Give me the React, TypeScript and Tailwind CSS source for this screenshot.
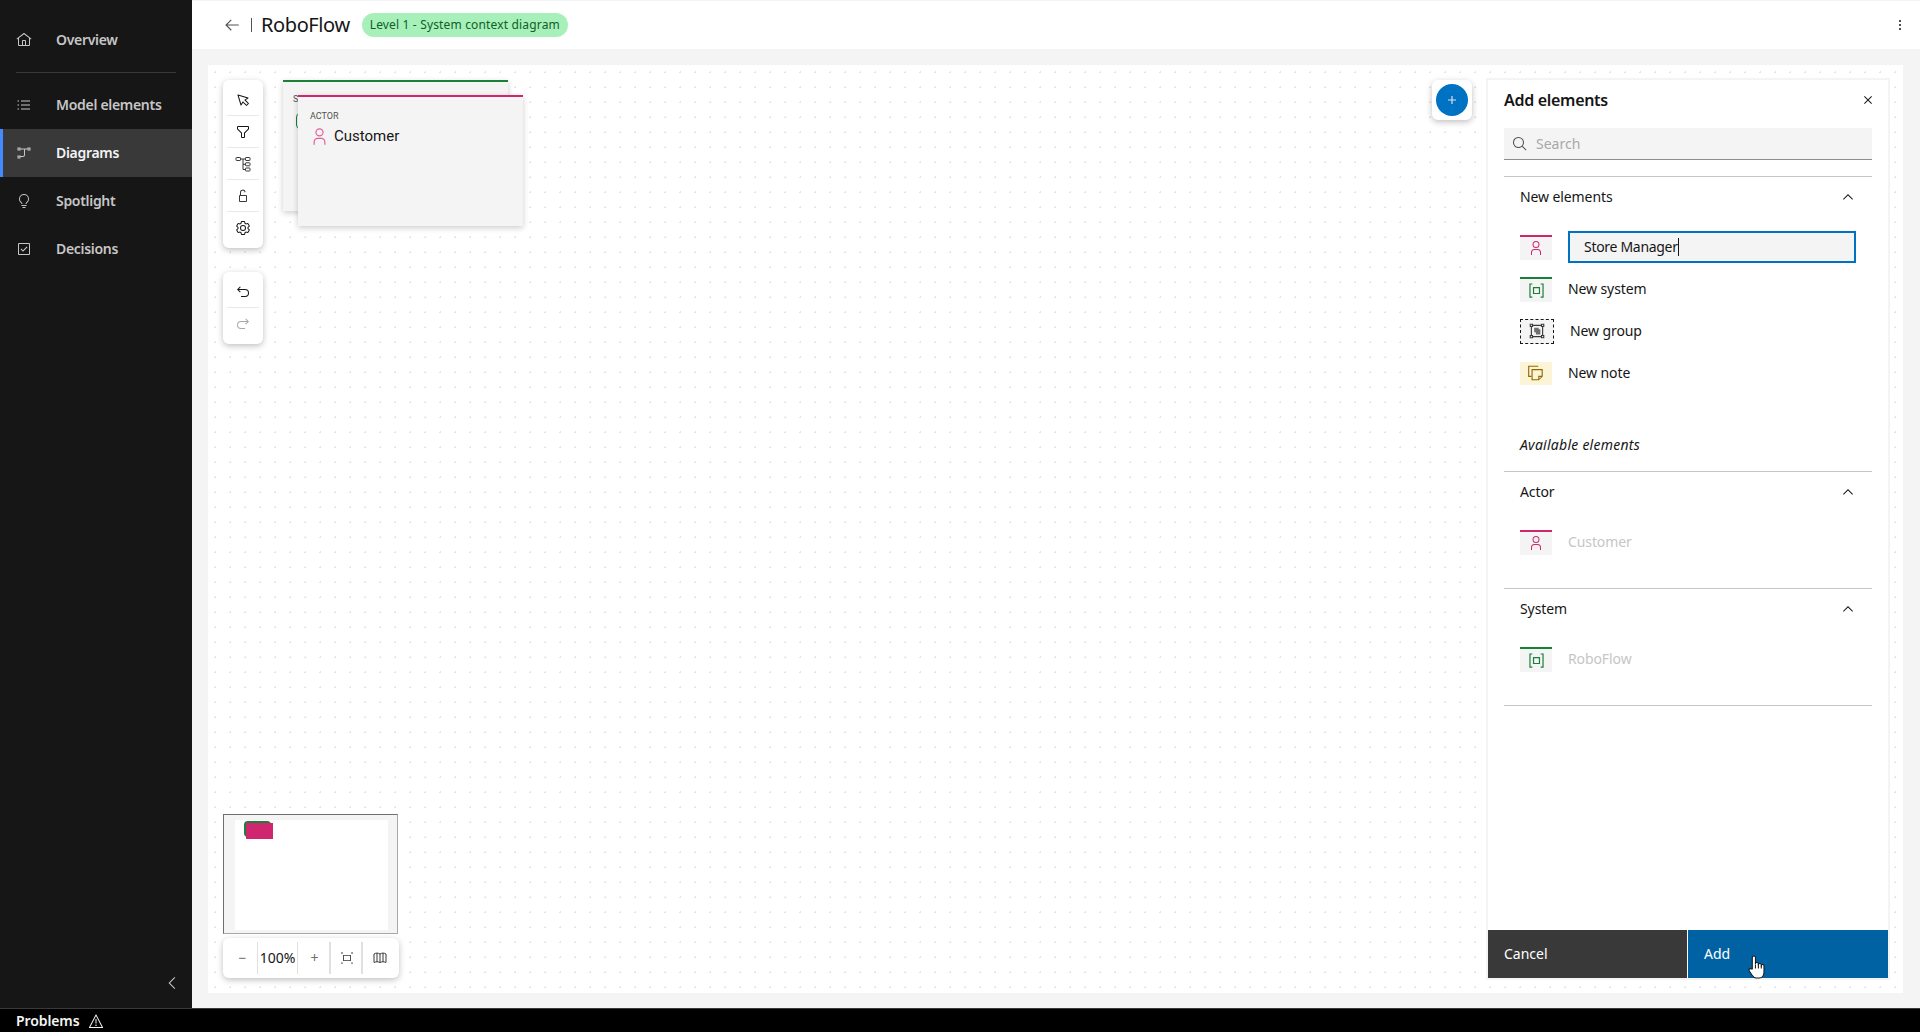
import React from "react";

type P = { s?: number; c?: string; className?: string };
const Ic = ({ s = 16, c = "currentColor", d, className }: P & { d: string[] }) => (
  <svg width={s} height={s} viewBox="0 0 32 32" fill={c} className={className}>
    {d.map((x, i) => (
      <path key={i} d={x} />
    ))}
  </svg>
);
const HOME = ["M16.6123,2.2138a1.01,1.01,0,0,0-1.2427,0L1,13.4194l1.2427,1.5717L4,13.6209V26a2.0041,2.0041,0,0,0,2,2H26a2.0037,2.0037,0,0,0,2-2V13.63L29.7573,15,31,13.4282ZM18,26H14V18h4Zm2,0V18a2.0023,2.0023,0,0,0-2-2H14a2.002,2.002,0,0,0-2,2v8H6V12.0615l10-7.79,10,7.8005V26Z"];
const LIST = ["M10 7H28V9H10zM10 15H28V17H10zM10 23H28V25H10zM3 7H6V9H3zM3 15H6V17H3zM3 23H6V25H3z"];
const FLOW = ["M3 5H9V11H3zM5 7V9H7V7zM23 5H29V11H23zM25 7V9H27V7zM3 21H9V27H3zM5 23V25H7V23zM9 7H23V9H18V20a4 4 0 0 1-4 4H9V22H14a2 2 0 0 0 2-2V9H9z"];
const IDEA = ["M11 24H21V26H11zM13 28H19V30H13zM16,2A10,10,0,0,0,6,12a9.19,9.19,0,0,0,3.46,7.62c1,.93,1.54,1.46,1.54,2.38h2c0-1.84-1.11-2.87-2.19-3.86A7.2,7.2,0,0,1,8,12a8,8,0,0,1,16,0,7.2,7.2,0,0,1-2.82,6.14c-1.07,1-2.18,2-2.18,3.86h2c0-.92.53-1.45,1.54-2.39A9.18,9.18,0,0,0,26,12,10,10,0,0,0,16,2Z"];
const CHECK = ["M26,4H6A2,2,0,0,0,4,6V26a2,2,0,0,0,2,2H26a2,2,0,0,0,2-2V6A2,2,0,0,0,26,4ZM6,26V6H26V26Z", "M14 21.5 9 16.54 10.59 15 14 18.35 21.41 11 23 12.58 14 21.5z"];
const CURSOR = ["M23,28a1,1,0,0,1-.71-.29l-6.13-6.14-3.33,5a1,1,0,0,1-1,.44,1,1,0,0,1-.81-.7l-6-20A1,1,0,0,1,6.29,5l20,6a1,1,0,0,1,.7.81,1,1,0,0,1-.44,1l-5,3.33,6.14,6.13a1,1,0,0,1,0,1.42l-4,4A1,1,0,0,1,23,28Zm0-2.41L25.59,23l-7.16-7.15,5.25-3.5L7.49,7.49l4.86,16.19,3.5-5.25Z"];
const FILTER = ["M18,28H14a2,2,0,0,1-2-2V18.41L4.59,11A2,2,0,0,1,4,9.59V6A2,2,0,0,1,6,4H26a2,2,0,0,1,2,2V9.59A2,2,0,0,1,27.41,11L20,18.41V26A2,2,0,0,1,18,28ZM6,6V9.59l8,8V26h4V17.59l8-8V6Z"];
const UNLOCK = ["M22,14H12V9a3.5,3.5,0,0,1,7-.5h2A5.5,5.5,0,0,0,10,9v5a2,2,0,0,0-2,2V26a2,2,0,0,0,2,2H22a2,2,0,0,0,2-2V16A2,2,0,0,0,22,14ZM10,26V16H22V26Z"];
const GEAR = ["M27,16.76c0-.25,0-.5,0-.76s0-.51,0-.77l1.92-1.68A2,2,0,0,0,29.3,11L26.94,7a2,2,0,0,0-1.73-1,2,2,0,0,0-.64.1l-2.43.82a11.35,11.35,0,0,0-1.31-.75l-.51-2.52a2,2,0,0,0-2-1.61H13.64a2,2,0,0,0-2,1.61l-.51,2.52a11.48,11.48,0,0,0-1.32.75L7.43,6.06A2,2,0,0,0,6.79,6,2,2,0,0,0,5.06,7L2.7,11a2,2,0,0,0,.41,2.51L5,15.24c0,.25,0,.5,0,.76s0,.51,0,.77L3.11,18.45A2,2,0,0,0,2.7,21L5.06,25a2,2,0,0,0,1.73,1,2,2,0,0,0,.64-.1l2.43-.82a11.35,11.35,0,0,0,1.31.75l.51,2.52a2,2,0,0,0,2,1.61h4.72a2,2,0,0,0,2-1.61l.51-2.52a11.48,11.48,0,0,0,1.32-.75l2.42.82a2,2,0,0,0,.64.1,2,2,0,0,0,1.73-1L29.3,21a2,2,0,0,0-.41-2.51ZM25.21,24l-3.43-1.16a8.86,8.86,0,0,1-2.71,1.57L18.36,28H13.64l-.71-3.55a9.36,9.36,0,0,1-2.7-1.57L6.79,24,4.43,20l2.72-2.4a8.9,8.9,0,0,1,0-3.13L4.43,12,6.79,8l3.43,1.16a8.86,8.86,0,0,1,2.71-1.57L13.64,4h4.72l.71,3.55a9.36,9.36,0,0,1,2.7,1.57L25.21,8,27.57,12l-2.72,2.4a8.9,8.9,0,0,1,0,3.13L27.57,20Z", "M16,22a6,6,0,1,1,6-6A5.94,5.94,0,0,1,16,22Zm0-10a3.91,3.91,0,0,0-4,4,3.91,3.91,0,0,0,4,4,3.91,3.91,0,0,0,4-4A3.91,3.91,0,0,0,16,12Z"];
const UNDO = ["M20,10H7.8149l3.5874-3.5859L10,5,4,11,10,17l1.4023-1.4146L7.8179,12H20a6,6,0,0,1,0,12H12v2h8a8,8,0,0,0,0-16Z"];
const REDO = ["M12,10H24.1851L20.5977,6.4141,22,5,28,11,22,17l-1.4023-1.4146L24.1821,12H12a6,6,0,0,0,0,12h8v2H12a8,8,0,0,1,0-16Z"];
const ARROW = ["M14 26 15.41 24.59 7.83 17 28 17 28 15 7.83 15 15.41 7.41 14 6 4 16 14 26z"];
const USER = ["M16,4a5,5,0,1,1-5,5,5,5,0,0,1,5-5m0-2a7,7,0,1,0,7,7A7,7,0,0,0,16,2Z", "M26,30H24V25a5,5,0,0,0-5-5H13a5,5,0,0,0-5,5v5H6V25a7,7,0,0,1,7-7h6a7,7,0,0,1,7,7Z"];
const SEARCH = ["M29,27.5859l-7.5521-7.5521a11.0177,11.0177,0,1,0-1.4141,1.4141L27.5859,29ZM4,13a9,9,0,1,1,9,9A9.01,9.01,0,0,1,4,13Z"];
const WARN = ["M16,23a1.5,1.5,0,1,0,1.5,1.5A1.5,1.5,0,0,0,16,23Z", "M15 12H17V21H15z", "M29,30H3a1,1,0,0,1-.8872-1.4614l13-25a1,1,0,0,1,1.7744,0l13,25A1,1,0,0,1,29,30ZM4.6507,28H27.3493l.002-.0033L16.002,6.1714h-.004L4.6487,27.9967Z"];
const CLOSE = ["M24 9.4 22.6 8 16 14.6 9.4 8 8 9.4 14.6 16 8 22.6 9.4 24 16 17.4 22.6 24 24 22.6 17.4 16 24 9.4z"];
const UP = ["M16 10 26 20 24.6 21.4 16 12.8 7.4 21.4 6 20z"];
const LEFT = ["M19 4 20.5 5.4 10 16 20.5 26.6 19 28 7 16z"];
const SYSTEM = ["M4 4H9V6H6V26H9V28H4zM23 4H28V28H23V26H26V6H23zM10 10H22V22H10zM12 12V20H20V12z"];
const GROUP_OUT = "M3 3H9V5H23V3H29V9H27V23H29V29H23V27H9V29H3V23H5V9H3zM5 5V7H7V5zM25 5V7H27V5zM5 25V27H7V25zM25 25V27H27V25zM7 9V23H9V25H23V23H25V9H23V7H9V9z";
const NOTE = ["M2 3H20V5H4V21H8V23H2z", "M8 9H28V22L21 29H8zM10 11V27H20V21H26V11zM22 23V26L25 23z"];
const FIT = ["M7 9H25V23H7zM9 11V21H23V11z", "M3 3H6V6H3zM26 3H29V6H26zM3 26H6V29H3zM26 26H29V29H26z"];

const Tree = () => (
  <svg width="16" height="16" viewBox="0 0 16 16" fill="none" stroke="#393939" strokeWidth="1">
    <rect x="1" y="1.5" width="4.5" height="3" rx="0.6" />
    <rect x="10.5" y="1.5" width="4.5" height="3" rx="0.6" />
    <rect x="10.5" y="6.8" width="4.5" height="3" rx="0.6" />
    <rect x="10.5" y="12" width="4.5" height="3" rx="0.6" />
    <path d="M5.5 3H10.5M8 3V13.5H10.5M8 8.3H10.5" />
  </svg>
);

const MapIcon = () => (
  <svg width="16" height="16" viewBox="0 0 16 16" fill="none" stroke="#393939" strokeWidth="1">
    <path d="M2 4C4 2.8 6 2.8 8 4C10 2.8 12 2.8 14 4V12.5C12 11.5 10 11.5 8 12.5C6 11.5 4 11.5 2 12.5ZM5 3.2V11.8M8 4V12.5M11 3.2V11.8" />
  </svg>
);

const Hand = () => (
  <svg width="18" height="24" viewBox="0 0 17 23" fill="#ffffff" stroke="#161616" strokeWidth="1" strokeLinejoin="round" className="absolute left-[260px] top-[25px]">
    <path d="M4 13.5V2.5a1.5 1.5 0 0 1 3 0V8.5a1.4 1.4 0 0 1 2.8 0V9.5a1.4 1.4 0 0 1 2.8 0V10.5a1.3 1.3 0 0 1 2.6 0V16c0 3-1.5 6-4.5 6H7.5C5.5 22 4.5 20.5 3.5 19L1 15c-.8-1.2.8-2.5 1.8-1.6Z" />
    <path d="M7 9V13M9.8 9V13M12.6 10V13" fill="none" />
  </svg>
);

const NavItem = ({ d, label, active }: { d: string[]; label: string; active?: boolean }) => (
  <div
    className={
      active
        ? "flex h-12 items-center gap-6 border-l-[3px] border-[#4589ff] bg-[#393939] pl-[13px] text-sm font-semibold tracking-[-0.3px] text-[#f4f4f4]"
        : "flex h-12 items-center gap-6 pl-4 text-sm font-semibold tracking-[-0.3px] text-[#c6c6c6]"
    }
  >
    <Ic d={d} s={16} c="#c6c6c6" />
    <span>{label}</span>
  </div>
);

const Swatch = ({ kind }: { kind: "actor" | "system" }) =>
  kind === "actor" ? (
    <div className="flex h-[25px] w-8 shrink-0 items-center justify-center border-t-2 border-[#d02670] bg-[#f4f4f4]">
      <Ic d={USER} s={16} c="#d02670" />
    </div>
  ) : (
    <div className="flex h-[25px] w-8 shrink-0 items-center justify-center border-t-2 border-[#198038] bg-[#f4f4f4]">
      <Ic d={SYSTEM} s={19} c="#198038" />
    </div>
  );

const SectionHead = ({ label }: { label: string }) => (
  <div className="flex h-[41px] items-center justify-between border-t border-[#c6c6c6] px-4 text-sm tracking-[-0.1px] text-[#161616]">
    <span>{label}</span>
    <Ic d={UP} s={16} c="#161616" />
  </div>
);

const ToolBtn = ({ d, c = "#161616", last }: { d: string[]; c?: string; last?: boolean }) => (
  <div className={last ? "flex h-8 items-center justify-center" : "flex h-8 items-center justify-center border-b border-[#e8e8e8]"}>
    <Ic d={d} s={16} c={c} />
  </div>
);

export default function App() {
  return (
    <div className="flex h-screen flex-col overflow-hidden bg-white font-['Noto_Sans',sans-serif] text-[#161616]">
      <div className="flex min-h-0 flex-1">
        <aside className="flex w-[192px] shrink-0 flex-col bg-[#161616] pt-4">
          <NavItem d={HOME} label="Overview" />
          <div className="mx-4 my-2 h-px bg-[#393939]" />
          <NavItem d={LIST} label="Model elements" />
          <NavItem d={FLOW} label="Diagrams" active />
          <NavItem d={IDEA} label="Spotlight" />
          <NavItem d={CHECK} label="Decisions" />
          <div className="mt-auto flex justify-end pb-[17px] pr-[11px]">
            <Ic d={LEFT} s={16} c="#c6c6c6" />
          </div>
        </aside>

        <div className="flex min-w-0 flex-1 flex-col bg-[#f4f4f4]">
          <header className="flex h-[49px] shrink-0 items-center border-t border-[#f4f4f4] bg-white pl-8 pr-3">
            <Ic d={ARROW} s={18} c="#525252" className="-ml-px" />
            <div className="ml-[10px] h-[14px] w-px bg-[#525252]" />
            <span className="ml-[9px] text-xl leading-7 tracking-[-0.4px] text-[#161616]">RoboFlow</span>
            <span className="ml-3 flex h-6 items-center rounded-full bg-[#a7f0ba] px-2 text-xs tracking-[0.16px] text-[#0e6027]">
              Level 1 - System context diagram
            </span>
            <svg className="ml-auto" width="16" height="16" viewBox="0 0 16 16" fill="#161616">
              <circle cx="8" cy="4" r="1" />
              <circle cx="8" cy="8" r="1" />
              <circle cx="8" cy="12" r="1" />
            </svg>
          </header>

          <div className="min-h-0 flex-1 pb-[15px] pl-4 pr-[17px] pt-4">
            <div className="relative flex h-full justify-end bg-white bg-[radial-gradient(#e4e4e4_1px,transparent_1px)] bg-[size:15px_15px] p-[13px]">
              {/* cards */}
              <div className="absolute left-[75px] top-[15px] h-[131px] w-[225px] border-t-2 border-[#198038] bg-[#f4f4f4] shadow-[0_2px_6px_rgba(0,0,0,0.2)]">
                <div className="absolute left-[10px] top-[11px] font-['Roboto',sans-serif] text-[9px] text-[#525252]">S</div>
                <div className="absolute left-[13px] top-[31px] h-4 w-4 rounded-sm border border-[#198038]" />
              </div>
              <div className="absolute left-[90px] top-[30px] h-[131px] w-[225px] border-t-2 border-[#d02670] bg-[#f4f4f4] pl-3 pt-3 font-['Roboto',sans-serif] shadow-[0_2px_6px_rgba(0,0,0,0.2)]">
                <div className="text-[9px] leading-[15px] text-[#525252]">ACTOR</div>
                <div className="mt-[2px] flex items-center gap-[5px] text-[15px] leading-5 text-[#161616]">
                  <Ic d={USER} s={19} c="#e0609a" />
                  <span>Customer</span>
                </div>
              </div>

              {/* tools */}
              <div className="absolute left-[15px] top-[15px] w-10 rounded-md bg-white px-1 py-1 shadow-[0_2px_6px_rgba(0,0,0,0.25)]">
                <ToolBtn d={CURSOR} />
                <ToolBtn d={FILTER} />
                <div className="flex h-8 items-center justify-center border-b border-[#e8e8e8]">
                  <Tree />
                </div>
                <ToolBtn d={UNLOCK} c="#393939" />
                <ToolBtn d={GEAR} last />
              </div>
              <div className="absolute left-[15px] top-[207px] w-10 rounded-md bg-white px-1 py-1 shadow-[0_2px_6px_rgba(0,0,0,0.25)]">
                <ToolBtn d={UNDO} />
                <ToolBtn d={REDO} c="#a8a8a8" last />
              </div>

              {/* minimap */}
              <div className="absolute bottom-[59px] left-[15px] flex h-[120px] w-[175px] border border-[#a8a8a8] border-l-[#6f6f6f] border-t-[#6f6f6f] bg-[#f4f4f4] py-[5px] pl-[11px]">
                <div className="relative h-[110px] w-[153px] bg-white">
                  <div className="absolute left-[9px] top-px h-4 w-[27px] rounded-sm bg-[#198038]" />
                  <div className="absolute left-[11px] top-[3px] h-4 w-[27px] bg-[#d02670]" />
                </div>
              </div>
              <div className="absolute bottom-[15px] left-[15px] flex h-10 w-[176px] items-center rounded-md bg-white shadow-[0_2px_6px_rgba(0,0,0,0.25)]">
                <div className="flex h-8 w-[35px] items-center justify-center border-r border-[#e0e0e0] pl-[5px] text-sm text-[#6f6f6f]">−</div>
                <div className="flex h-8 w-10 items-center justify-center border-r border-[#e0e0e0] text-sm">100%</div>
                <div className="flex h-8 w-[33px] items-center justify-center border-r-2 border-[#e0e0e0] pl-[2px] text-sm text-[#6f6f6f]">+</div>
                <div className="flex h-8 w-8 items-center justify-center border-r-2 border-[#e0e0e0] pl-px">
                  <Ic d={FIT} s={14} c="#393939" />
                </div>
                <div className="flex h-8 flex-1 items-center justify-center pr-[2px]">
                  <MapIcon />
                </div>
              </div>

              {/* plus */}
              <div className="mr-[14px] mt-[2px] flex h-10 w-10 items-center justify-center rounded-md bg-white shadow-[0_2px_6px_rgba(0,0,0,0.25)]">
                <div className="flex h-8 w-8 items-center justify-center rounded-full bg-[#0072c3] text-white">
                  <svg width="10" height="10" viewBox="0 0 10 10" fill="#e0e0e0">
                    <path d="M4.4 1H5.6V4.4H9V5.6H5.6V9H4.4V5.6H1V4.4H4.4z" />
                  </svg>
                </div>
              </div>

              {/* panel */}
              <section className="flex w-[404px] flex-col border-2 border-[#f4f4f4] bg-white">
                <div className="flex h-12 shrink-0 items-center justify-between px-4 pb-2">
                  <h2 className="text-base font-semibold tracking-[-0.3px] text-[#161616]">Add elements</h2>
                  <Ic d={CLOSE} s={16} c="#161616" className="mr-[-4px]" />
                </div>
                <div className="mx-4 flex h-8 shrink-0 items-center gap-2 border-b border-[#8d8d8d] bg-[#f4f4f4] pl-2 text-sm text-[#a8a8a8]">
                  <Ic d={SEARCH} s={16} c="#525252" />
                  <span>Search</span>
                </div>
                <div className="mx-4 mt-4">
                  <SectionHead label="New elements" />
                  <div className="flex flex-col gap-[10px] px-4 pt-[14px] tracking-[-0.1px]">
                    <div className="flex h-8 items-center gap-4">
                      <Swatch kind="actor" />
                      <div className="flex h-8 w-[288px] items-center border-2 border-[#0072c3] bg-[#f4f4f4] pl-[14px] text-sm tracking-[-0.3px] text-[#161616]">
                        Store Manager
                        <span className="h-[18px] w-px bg-[#161616]" />
                      </div>
                    </div>
                    <div className="flex h-8 items-center gap-4 text-sm">
                      <Swatch kind="system" />
                      <span>New system</span>
                    </div>
                    <div className="flex h-8 items-center gap-4 text-sm">
                      <div className="flex h-[25px] w-[34px] shrink-0 items-center justify-center border border-dashed border-[#161616] bg-[#f4f4f4]">
                        <svg width="18" height="18" viewBox="0 0 32 32">
                          <path fill="#393939" d={GROUP_OUT} />
                          <path fill="#6f6f6f" d="M11 10H19V13H22V22H14V18H11z" />
                        </svg>
                      </div>
                      <span>New group</span>
                    </div>
                    <div className="flex h-8 items-center gap-4 text-sm">
                      <div className="flex h-[23px] w-8 shrink-0 items-center justify-center bg-[#fcf4d6]">
                        <Ic d={NOTE} s={18} c="#8e6a00" />
                      </div>
                      <span>New note</span>
                    </div>
                  </div>
                  <div className="mb-4 mt-[46px] px-4 text-sm italic tracking-[0.25px] text-[#161616]">Available elements</div>
                  <SectionHead label="Actor" />
                  <div className="flex items-center gap-4 px-4 pb-[30px] pt-[14px] text-sm tracking-[-0.1px] text-[#c6c6c6]">
                    <div className="flex h-8 items-center gap-4">
                      <Swatch kind="actor" />
                      <span>Customer</span>
                    </div>
                  </div>
                  <SectionHead label="System" />
                  <div className="flex items-center gap-4 px-4 pb-[30px] pt-[14px] text-sm tracking-[-0.1px] text-[#c6c6c6]">
                    <div className="flex h-8 items-center gap-4">
                      <Swatch kind="system" />
                      <span>RoboFlow</span>
                    </div>
                  </div>
                  <div className="h-px bg-[#c6c6c6]" />
                </div>
                <div className="relative mt-auto flex h-12 shrink-0 gap-px text-sm text-white">
                  <div className="flex w-[199px] items-center bg-[#393939] pl-4">Cancel</div>
                  <div className="flex flex-1 items-center bg-[#0062a3] pl-4">Add</div>
                  <Hand />
                </div>
              </section>
            </div>
          </div>
        </div>
      </div>

      <footer className="flex h-6 shrink-0 items-center gap-2 border-t border-[#393939] bg-black pl-4 text-sm font-semibold tracking-[-0.1px] text-[#f4f4f4]">
        <span>Problems</span>
        <Ic d={WARN} s={16} c="#f4f4f4" />
      </footer>
    </div>
  );
}
